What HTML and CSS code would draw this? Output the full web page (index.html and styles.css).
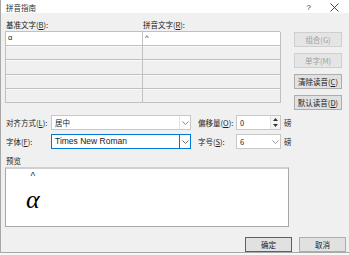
FILE: index.html
```html
<!DOCTYPE html>
<html lang="zh-CN">
<head>
    <meta charset="UTF-8">
    <title>拼音指南</title>
    <link rel="stylesheet" href="styles.css">
</head>
<body>
    <div class="dialog">
        <div class="titlebar">
            <span class="title">拼音指南</span>
            <div class="title-btns">
                <span class="help">?</span>
                <svg class="close" width="9" height="9" viewBox="0 0 9 9"><path d="M0.5 0.5 L8.5 8.5 M8.5 0.5 L0.5 8.5" stroke="#333" stroke-width="0.9" fill="none"/></svg>
            </div>
        </div>

        <div class="body">
            <div class="top">
                <div class="table-area">
                    <div class="col-labels">
                        <span>基准文字(<u>B</u>):</span>
                        <span>拼音文字(<u>R</u>):</span>
                    </div>
                    <div class="pinyin-grid">
                        <div class="cell active">α</div><div class="cell active">^</div>
                        <div class="cell"></div><div class="cell"></div>
                        <div class="cell"></div><div class="cell"></div>
                        <div class="cell"></div><div class="cell"></div>
                        <div class="cell"></div><div class="cell"></div>
                    </div>
                </div>
                <div class="side-btns">
                    <button class="btn" disabled>组合(G)</button>
                    <button class="btn" disabled>单字(M)</button>
                    <button class="btn">清除读音(<u>C</u>)</button>
                    <button class="btn">默认读音(<u>D</u>)</button>
                </div>
            </div>

            <div class="options">
                <div class="opt-row">
                    <span class="opt-label">对齐方式(<u>L</u>):</span>
                    <div class="select wide">
                        <span class="value">居中</span>
                        <span class="arrow"><svg width="7" height="4" viewBox="0 0 7 4"><path d="M0.5 0.5 L3.5 3.5 L6.5 0.5" stroke="#888" fill="none"/></svg></span>
                    </div>
                    <span class="opt-label second">偏移量(<u>O</u>):</span>
                    <div class="select small">
                        <span class="value">0</span>
                        <span class="spin">
                            <svg width="5" height="3" viewBox="0 0 5 3"><path d="M0 3 L2.5 0 L5 3 Z" fill="#333"/></svg>
                            <svg width="5" height="3" viewBox="0 0 5 3"><path d="M0 0 L2.5 3 L5 0 Z" fill="#333"/></svg>
                        </span>
                    </div>
                    <span class="unit">磅</span>
                </div>
                <div class="opt-row">
                    <span class="opt-label">字体(<u>F</u>):</span>
                    <div class="select wide focused">
                        <span class="value latin">Times New Roman</span>
                        <span class="arrow"><svg width="7" height="4" viewBox="0 0 7 4"><path d="M0.5 0.5 L3.5 3.5 L6.5 0.5" stroke="#666" fill="none"/></svg></span>
                    </div>
                    <span class="opt-label second">字号(<u>S</u>):</span>
                    <div class="select small">
                        <span class="value">6</span>
                        <span class="arrow plain"><svg width="7" height="4" viewBox="0 0 7 4"><path d="M0.5 0.5 L3.5 3.5 L6.5 0.5" stroke="#999" fill="none"/></svg></span>
                    </div>
                    <span class="unit">磅</span>
                </div>
            </div>

            <div class="preview-label">预览</div>
            <div class="preview">
                <div class="ruby">
                    <span class="ruby-top">^</span>
                    <span class="ruby-base">α</span>
                </div>
            </div>

            <div class="footer">
                <button class="btn default">确定</button>
                <button class="btn">取消</button>
            </div>
        </div>
    </div>
</body>
</html>
```

FILE: styles.css
```css
html {
    background-color: #f7f7f7;
}

body {
    margin: 0;
    padding: 0;
    font-family: "Noto Sans CJK SC", "Liberation Sans", sans-serif;
    font-size: 7.5px;
    color: #222;
}

u {
    text-decoration: underline;
    text-underline-offset: 1px;
}

.dialog {
    width: 348px;
    height: 252px;
    background-color: #f0f0f0;
    border-left: 1px solid #a8a8a8;
    border-bottom: 1px solid #a8a8a8;
    display: flex;
    flex-direction: column;
}

.titlebar {
    height: 17px;
    background-color: #fff;
    display: flex;
    justify-content: space-between;
    align-items: center;
    padding: 2px 0 0 5px;
    box-sizing: border-box;
}

.title {
    color: #333;
}

.title-btns {
    display: flex;
    align-items: center;
    gap: 19px;
    padding-right: 10px;
}

.help {
    font-family: "Liberation Sans", sans-serif;
    font-size: 8px;
    color: #333;
}

.body {
    padding-left: 4px;
    display: flex;
    flex-direction: column;
}

.top {
    display: flex;
}

.table-area {
    width: 275px;
}

.col-labels {
    display: grid;
    grid-template-columns: 137px 138px;
    margin-top: 7px;
    height: 10px;
    line-height: 10px;
    margin-bottom: 1px;
}

.col-labels span {
    padding-left: 1px;
}

.pinyin-grid {
    display: grid;
    grid-template-columns: 137px 138px;
    grid-template-rows: repeat(5, 1fr);
    height: 72px;
    border-left: 1px solid #c0c0c0;
    border-top: 1px solid #c0c0c0;
    box-sizing: border-box;
}

.cell {
    border-right: 1px solid #c0c0c0;
    border-bottom: 1px solid #c0c0c0;
    box-shadow: inset 0 1px 0 #fafafa;
    padding-left: 2px;
    line-height: 12px;
    font-family: "Liberation Sans", sans-serif;
    font-size: 7.5px;
}

.cell.active {
    background-color: #fff;
    box-shadow: none;
}

.side-btns {
    display: flex;
    flex-direction: column;
    gap: 6px;
    margin: 19px 0 0 14px;
}

.btn {
    width: 48px;
    height: 15px;
    padding: 0;
    font-family: "Noto Sans CJK SC", "Liberation Sans", sans-serif;
    font-size: 7.5px;
    color: #222;
    background-color: #e1e1e1;
    border: 1px solid #adadad;
    line-height: 13px;
}

.btn:disabled {
    color: #a0a0a0;
    background-color: #e5e5e5;
    border-color: #cfcfcf;
}

.options {
    display: flex;
    flex-direction: column;
    gap: 4px;
    margin-top: 5px;
}

.opt-row {
    display: flex;
    align-items: center;
    height: 15px;
}

.opt-label {
    width: 45px;
    padding-left: 1px;
}

.opt-label.second {
    width: 38px;
    margin-left: 6px;
}

.select {
    display: flex;
    justify-content: space-between;
    align-items: stretch;
    height: 15px;
    box-sizing: border-box;
    background-color: #fff;
    border: 1px solid #c8c8c8;
}

.select.wide {
    width: 140px;
}

.select.small {
    width: 45px;
}

.select.focused {
    border-color: #0078d7;
}

.value {
    padding-left: 3px;
    line-height: 13px;
}

.value.latin {
    font-family: "Liberation Sans", sans-serif;
    font-size: 8.5px;
}

.arrow {
    width: 10px;
    display: flex;
    align-items: center;
    justify-content: center;
    border-left: 1px solid #e3e3e3;
}

.focused .arrow {
    border-left-color: #0078d7;
}

.arrow.plain {
    border-left: none;
}

.spin {
    width: 9px;
    display: flex;
    flex-direction: column;
    justify-content: space-around;
    align-items: center;
    border-left: 1px solid #e3e3e3;
    background-color: #f4f4f4;
}

.unit {
    margin-left: 3px;
}

.preview-label {
    margin-top: 7px;
    height: 10px;
    line-height: 10px;
    padding-left: 1px;
}

.preview {
    width: 284px;
    height: 60px;
    margin-top: 1px;
    box-sizing: border-box;
    background-color: #fff;
    border: 1px solid #a8a8a8;
    border-top: 2px solid #d0d0d0;
    padding: 2px 0 0 20px;
}

.ruby {
    display: inline-flex;
    flex-direction: column;
    align-items: center;
}

.ruby-top {
    font-family: "Liberation Sans", sans-serif;
    font-size: 10px;
    line-height: 10px;
    color: #333;
}

.ruby-base {
    font-family: "Liberation Serif", serif;
    font-style: italic;
    font-size: 26px;
    line-height: 36px;
    color: #000;
}

.footer {
    display: flex;
    justify-content: flex-end;
    gap: 7px;
    margin-top: 10px;
    padding-right: 3px;
}

.footer .btn {
    width: 47px;
}

.btn.default {
    border-color: #0078d7;
}
```
